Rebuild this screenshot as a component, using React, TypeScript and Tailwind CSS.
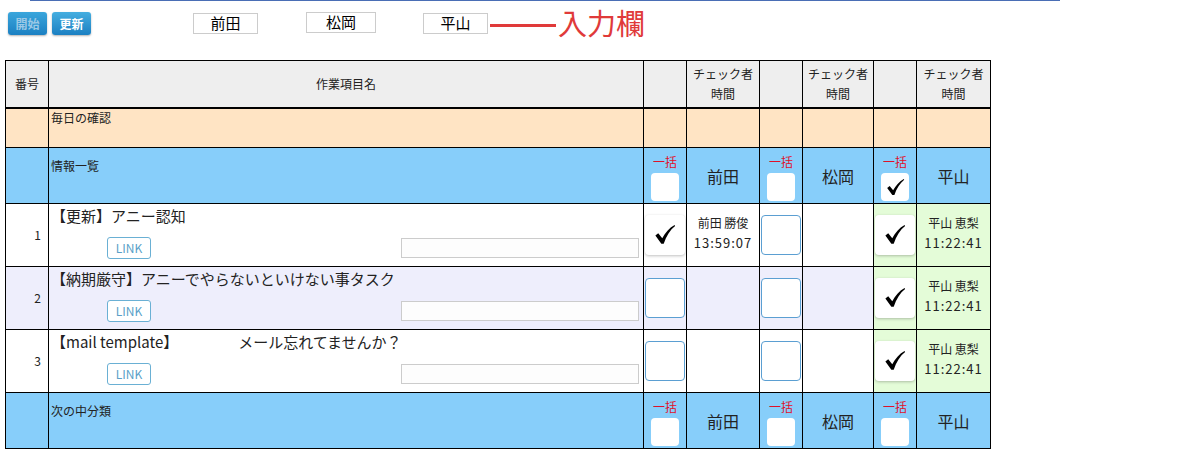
import React from 'react';

type Check = { checked: boolean; name?: string; time?: string; green?: boolean };

interface Task {
  no: number;
  title: React.ReactNode;
  bg: string;
  checks: Check[];
}

const tasks: Task[] = [
  {
    no: 1,
    title: '【更新】アニー認知',
    bg: 'bg-white',
    checks: [
      { checked: true, name: '前田 勝俊', time: '13:59:07' },
      { checked: false },
      { checked: true, name: '平山 恵梨', time: '11:22:41', green: true },
    ],
  },
  {
    no: 2,
    title: '【納期厳守】アニーでやらないといけない事タスク',
    bg: 'bg-[#eeeefc]',
    checks: [
      { checked: false },
      { checked: false },
      { checked: true, name: '平山 恵梨', time: '11:22:41', green: true },
    ],
  },
  {
    no: 3,
    title: (
      <>
        【mail template】<span className="ml-[60px]">メール忘れてませんか？</span>
      </>
    ),
    bg: 'bg-white',
    checks: [
      { checked: false },
      { checked: false },
      { checked: true, name: '平山 恵梨', time: '11:22:41', green: true },
    ],
  },
];

const members = ['前田', '松岡', '平山'];

const font = { fontFamily: '"Noto Sans CJK JP", "Noto Sans", sans-serif' };

// calligraphic tick, thick at the bottom corner
const CheckMark: React.FC<{ size: number }> = ({ size }) => (
  <svg width={size} height={size} viewBox="0 0 24 24">
    <path d="M1.5 12.5 L4.6 10.2 L9 15.6 C12.4 9.6 16.4 4.6 22.4 1.2 L23 2.2 C17.6 6.6 13.4 13 10.6 21.6 L8 21.6 Z" fill="#000" />
  </svg>
);

const BigBox: React.FC<{ checked: boolean }> = ({ checked }) =>
  checked ? (
    <div className="mx-auto flex h-[40px] w-[40px] items-center justify-center rounded-[4px] bg-white shadow-[0_1px_3px_rgba(0,0,0,0.25)]">
      <CheckMark size={22} />
    </div>
  ) : (
    <div className="mx-auto h-[40px] w-[40px] rounded-[4px] border border-[#5b9fd2] bg-white" />
  );

const GroupRow: React.FC<{ label: string; checks: boolean[] }> = ({ label, checks }) => (
  <tr className="h-[56px] bg-[#87cefa]">
    <td className="border border-black" />
    <td className="border border-black px-[2px] align-top pt-[9px] text-[12px]">{label}</td>
    {members.map((m, i) => (
      <React.Fragment key={m}>
        <td className="border border-black text-center align-top pt-[7px]">
          <div className="text-[12px] leading-[14px] text-[#e0102a]">一括</div>
          <div className="mx-auto mt-[4px] flex h-[28px] w-[28px] items-center justify-center rounded-[4px] bg-white">
            {checks[i] && <CheckMark size={19} />}
          </div>
        </td>
        <td className="border border-black text-center text-[16px]">{m}</td>
      </React.Fragment>
    ))}
  </tr>
);

const App: React.FC = () => {
  return (
    <div className="relative h-[454px] w-[1191px] bg-white text-[#222]" style={font}>
      <div className="ml-[30px] h-px w-[1030px] bg-[#4a6eb5]" />

      <div className="flex items-center pt-[8px] pl-[8px]">
        <button className="h-[23px] w-[39px] rounded-[3px] bg-gradient-to-b from-[#3aa6dc] to-[#1b80c2] text-[12px] font-bold text-[#9cc9e6] shadow-[0_1px_2px_rgba(0,0,0,0.3)]">
          開始
        </button>
        <button className="ml-[5px] h-[23px] w-[39px] rounded-[3px] bg-gradient-to-b from-[#45aee0] to-[#1b80c2] text-[12px] font-bold text-white shadow-[0_1px_2px_rgba(0,0,0,0.3)]">
          更新
        </button>
        <input readOnly value="前田" className="ml-[102px] h-[21px] w-[65px] border border-[#ccc] text-center text-[15px] text-black outline-none" />
        <input readOnly value="松岡" className="ml-[48px] h-[21px] w-[70px] -translate-y-[1px] border border-[#ccc] text-center text-[15px] text-black outline-none" />
        <input readOnly value="平山" className="ml-[47px] h-[21px] w-[65px] border border-[#ccc] text-center text-[15px] text-black outline-none" />
        <div className="ml-[2px] h-[3px] w-[66px] translate-y-[2px] bg-[#e03a3a]" />
        <span className="ml-[2px] -translate-y-[1px] text-[29px] leading-none text-[#e03a3a]">入力欄</span>
      </div>

      <table className="ml-[5px] mt-[22px] border-collapse text-[12px]" style={{ tableLayout: 'fixed', width: 985 }}>
        <colgroup>
          <col style={{ width: 43 }} />
          <col style={{ width: 595 }} />
          <col style={{ width: 43 }} />
          <col style={{ width: 73 }} />
          <col style={{ width: 43 }} />
          <col style={{ width: 71 }} />
          <col style={{ width: 43 }} />
          <col style={{ width: 74 }} />
        </colgroup>
        <thead>
          <tr className="h-[47px] bg-[#eeeeee]">
            <th className="border border-black border-b-2 font-normal">番号</th>
            <th className="border border-black border-b-2 font-normal">作業項目名</th>
            {members.map((m) => (
              <React.Fragment key={m}>
                <th className="border border-black border-b-2" />
                <th className="border border-black border-b-2 font-normal text-[12px] leading-[20px]">
                  チェック者
                  <br />
                  時間
                </th>
              </React.Fragment>
            ))}
          </tr>
        </thead>
        <tbody>
          <tr className="h-[40px] bg-[#ffe4c4]">
            <td className="border border-black" />
            <td className="border border-black px-[2px] align-top text-[12px]">毎日の確認</td>
            {[0, 1, 2, 3, 4, 5].map((i) => (
              <td key={i} className="border border-black" />
            ))}
          </tr>
          <GroupRow label="情報一覧" checks={[false, false, true]} />
          {tasks.map((t) => (
            <tr key={t.no} className={`h-[63px] ${t.bg}`}>
              <td className="border border-black pr-[7px] text-right text-[12px]">{t.no}</td>
              <td className="border border-black px-[2px] align-top">
                <div className="pt-[2px] text-[15px] leading-[20px]">{t.title}</div>
                <div className="mt-[11px] flex items-center">
                  <span className="ml-[56px] flex h-[22px] w-[44px] items-center justify-center rounded-[3px] border border-[#6ab0d4] bg-white text-[12px] text-[#5a9fc8]">
                    LINK
                  </span>
                  <input readOnly className="ml-[250px] h-[20px] w-[238px] border border-[#ccc] bg-[#fdfdfd] outline-none" />
                </div>
              </td>
              {t.checks.map((c, i) => (
                <React.Fragment key={i}>
                  <td className={`border border-black ${c.green ? 'bg-[#e4fcd8]' : ''}`}>
                    <BigBox checked={c.checked} />
                  </td>
                  <td className={`border border-black text-center ${c.green ? 'bg-[#e4fcd8]' : ''}`}>
                    {c.name && (
                      <div className="-translate-y-[2px]">
                        <div className="text-[12px] leading-[20px]">{c.name}</div>
                        <div className="text-[13px] leading-[20px] tracking-[1px]">{c.time}</div>
                      </div>
                    )}
                  </td>
                </React.Fragment>
              ))}
            </tr>
          ))}
          <GroupRow label="次の中分類" checks={[false, false, false]} />
        </tbody>
      </table>
    </div>
  );
};

export default App;
